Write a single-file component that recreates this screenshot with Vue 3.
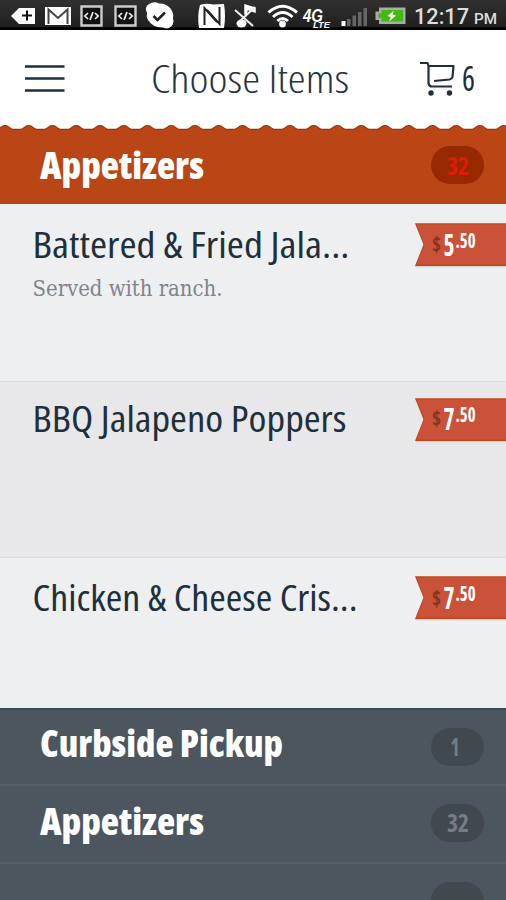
<script setup>
const items = [
  { name: 'Battered & Fried Jala...', width: 317, base: 52.5, note: 'Served with ranch.', height: 177, tag: 18, dollars: '5', cents: '.50', drop: 32.5 },
  { name: 'BBQ Jalapeno Poppers', width: 314, base: 49.5, height: 176, tag: 16, dollars: '7', cents: '.50', drop: 31.5, shade: true },
  { name: 'Chicken & Cheese Cris...', width: 325, base: 53, height: 151, tag: 18, dollars: '7', cents: '.50', drop: 33 }
]

const categories = [
  { name: 'Curbside Pickup', count: '1', width: 243, countWidth: 9, countX: 19.5, base: 49, height: 78, pad: 20 },
  { name: 'Appetizers', count: '32', width: 164, countWidth: 22, countX: 16, base: 49, height: 78, pad: 18 },
  { name: '', count: '', width: 0, height: 36, pad: 18 }
]

// scalloped top edge of the active category
const period = 23.75
let wave = 'M-18.75 10V0'
for (let x = -18.75; x < 520; x += period) {
  wave += `C${x + 4.5} 0 ${x + 4.5} 3.8 ${x + 9.5} 3.8H${x + period - 9.5}C${x + period - 4.5} 3.8 ${x + period - 4.5} 0 ${x + period} 0`
}
wave += 'V10Z'
</script>

<template>
  <main class="screen">
    <div class="status">
      <svg width="40" height="30" viewBox="0 0 40 30"><path d="M11 16 19 8H35V24H19Z" fill="#fff" /><path d="M22 15.5H32M27 10.5V20.5" stroke="#111" stroke-width="2" /></svg>
      <svg width="36" height="30" viewBox="40 0 36 30"><path d="M45 7H71V25H45Z" fill="#fff" /><path d="M48.500 24V9.500L58 18 67.500 9.500V24" fill="none" stroke="#444" stroke-width="2" /></svg>
      <svg v-for="n in 2" :key="n" width="34" height="30" viewBox="0 0 34 30"><path d="M5.5 6.5H25.5V25.5H5.5Z" fill="#111" stroke="#ccc" stroke-width="2.4" /><path d="M12 13 8.8 16 12 19M19 13 22.2 16 19 19M17 12 14 20" fill="none" stroke="#eee" stroke-width="1.7" /></svg>
      <svg width="44" height="30" viewBox="144 0 44 30"><path d="M149 4Q154 1 159 3.500Q168 3 172 11Q174 15 173 18Q175 25 169 28Q166 29 163 27.500Q153 28 148 20Q146 17 147 13Q144 7 149 4Z" fill="#fff" /><path d="M153.500 16 157.500 20 165 12.500" fill="none" stroke="#222" stroke-width="2.6" /></svg>
      <svg width="42" height="30" viewBox="188 0 42 30"><path d="M200 5Q206 3 213 4.500L224 4Q226 16 224 28H212L199 28Q197 16 200 5Z" fill="#fff" /><path d="M204.500 25V8L217 22M207 10 219.500 24V7" fill="none" stroke="#222" stroke-width="2" /></svg>
      <svg width="32" height="30" viewBox="230 0 32 30"><ellipse cx="241.500" cy="23.500" rx="5" ry="4" fill="#fff" /><path d="M245 23V5L255 8V12L248 9.500" fill="#fff" stroke="#fff" stroke-width="1.500" /><path d="M234 8 253 25" stroke="#292929" stroke-width="4" /><path d="M235 10 253 26M255 7 239 22" stroke="#eee" stroke-width="2" /></svg>
      <svg width="38" height="30" viewBox="262 0 38 30"><g fill="none" stroke="#fff" stroke-width="3"><path d="M268.500 12.500Q282.500 0 297 12.500M273 17Q282.500 8 292.500 17M277.500 21Q282.500 16 288 21" /></g><circle cx="282.500" cy="24" r="3.400" fill="#fff" /></svg>
      <svg width="38" height="30" viewBox="300 0 38 30"><g class="network"><text x="303" y="22" font-size="18" textLength="20" lengthAdjust="spacingAndGlyphs">4G</text><text x="313" y="28" font-size="9" textLength="17" lengthAdjust="spacingAndGlyphs">LTE</text></g></svg>
      <svg width="34" height="30" viewBox="338 0 34 30"><path d="M341.500 21H345.500V26H341.500Z" fill="#fff" /><path d="M347 19H350.500V26H347ZM352.500 15.500H356V26H352.500ZM358 12H361.500V26H358ZM363.500 8H367V26H363.500Z" fill="#666" /></svg>
      <svg width="38" height="30" viewBox="372 0 38 30"><path d="M379 7.500H405.500V24H379V20H375.500V11.500H379Z" fill="#aaa" /><path d="M381.500 10H403V21.500H381.500V18H378.500V13.500H381.500Z" fill="#45b811" /><path d="M394 10.500 387.500 16 391 17 389 21.500 396 15.500 392.500 14.500Z" fill="#fff" /></svg>
      <svg width="96" height="30" viewBox="410 0 96 30"><g class="clock"><text x="414" y="24" font-size="21.500" textLength="55" lengthAdjust="spacingAndGlyphs">12:17</text><text x="474" y="24" font-size="14.500" textLength="23" lengthAdjust="spacingAndGlyphs">PM</text></g></svg>
    </div>

    <header class="header">
      <svg class="menu" width="40" height="30" viewBox="0 0 40 30"><path d="M0 2.500H39.500M0 14.500H39.500M0 26.500H39.500" stroke="#1d3040" stroke-width="2.500" /></svg>
      <svg class="title" width="200" height="56" viewBox="0 0 200 56"><text x="0" y="42" textLength="198" lengthAdjust="spacingAndGlyphs">Choose Items</text></svg>
      <svg class="cart" width="60" height="56" viewBox="418 50 60 56">
        <g fill="none" stroke="#1d3040" stroke-width="2.200" stroke-linejoin="round"><path d="M420 63H427.500L428.500 66V83Q429 86.500 432 86.500H452" /><path d="M428.500 66H453.500L452.500 77Q452 79 449.500 79.500L434 81" /></g>
        <circle cx="431" cy="93" r="2.700" fill="#1d3040" /><circle cx="449.500" cy="93" r="2.700" fill="#1d3040" />
        <text x="462" y="91" textLength="13" lengthAdjust="spacingAndGlyphs">6</text>
      </svg>
    </header>

    <section class="active">
      <svg class="wave" width="506" height="10" viewBox="0 0 506 10"><path :d="wave" fill="#8f2f08" /><path :d="wave" transform="translate(0 .9)" fill="#b94614" /></svg>
      <div class="active-body">
        <svg class="category" width="260" height="60" viewBox="0 0 260 60"><text x="0" y="44" textLength="164" lengthAdjust="spacingAndGlyphs">Appetizers</text></svg>
        <span class="badge"><svg width="53" height="38" viewBox="0 0 53 38"><text x="16" y="28.500" textLength="22" lengthAdjust="spacingAndGlyphs">32</text></svg></span>
      </div>
    </section>

    <article v-for="item in items" :key="item.name" class="item" :class="{ shade: item.shade }" :style="{ height: item.height + 'px' }">
      <div class="copy">
        <svg width="360" height="68" viewBox="0 0 360 68"><text class="name" x="-0.5" :y="item.base" :textLength="item.width" lengthAdjust="spacingAndGlyphs">{{ item.name }}</text></svg>
        <svg v-if="item.note" width="220" height="34" viewBox="0 0 220 34"><text class="note" x="-0.5" y="22.5" textLength="190" lengthAdjust="spacingAndGlyphs">{{ item.note }}</text></svg>
      </div>
      <svg class="tag" width="91" height="46" viewBox="0 0 91 46" :style="{ marginTop: item.tag + 'px' }">
        <path d="M0 1H91V44.500H0L8.500 22.500Z" fill="#d8d7d8" />
        <path d="M0 .3H91V43H0L8.500 21.500Z" fill="#c34416" />
        <path d="M1.500 1.500H91V41.500H1.500L9.500 21.500Z" fill="#ca5239" />
        <text class="dollar" x="17" :y="item.drop - 3.5" textLength="9" lengthAdjust="spacingAndGlyphs">$</text>
        <text class="whole" x="28.500" :y="item.drop" textLength="11" lengthAdjust="spacingAndGlyphs">{{ item.dollars }}</text>
        <text class="cents" x="40.500" :y="item.drop - 8" textLength="20" lengthAdjust="spacingAndGlyphs">{{ item.cents }}</text>
      </svg>
    </article>

    <section class="categories">
      <div v-for="(category, i) in categories" :key="i" class="row" :style="{ height: category.height + 'px' }">
        <svg class="category" width="260" height="60" viewBox="0 0 260 60"><text v-if="category.name" x="0" :y="category.base" :textLength="category.width" lengthAdjust="spacingAndGlyphs">{{ category.name }}</text></svg>
        <span class="badge" :style="{ marginTop: category.pad + 'px' }"><svg width="53" height="38" viewBox="0 0 53 38"><text v-if="category.count" :x="category.countX" y="27.500" :textLength="category.countWidth" lengthAdjust="spacingAndGlyphs">{{ category.count }}</text></svg></span>
      </div>
    </section>
  </main>
</template>

<style>
body { margin: 0; overflow: hidden; }
</style>

<style scoped>
.screen { width: 506px; height: 900px; overflow: hidden; background: #fff; font-family: "Open Sans", "Noto Sans", sans-serif; font-stretch: 75%; }
svg { display: block; flex: none; overflow: visible; }
.status { display: flex; height: 30px; background: linear-gradient(#303030, #202020 90%, #000 92%); }
.network { fill: #fff; font-family: "Liberation Sans", sans-serif; font-weight: 700; font-style: italic; }
.clock { fill: #ddd; font-family: Roboto, sans-serif; font-stretch: 100%; font-weight: 500; }
.header { display: flex; height: 95px; align-items: flex-start; }
.menu { margin: 34px 0 0 25px; }
.title { margin: 21px 0 0 86px; fill: #263442; font-size: 39px; font-weight: 300; }
.cart { margin: 20px 0 0 67px; fill: #1d3040; font-size: 35px; font-weight: 500; }
.active { height: 79px; background: linear-gradient(#b94614 98%, #a93d12); }
.wave { background: #fff; overflow: hidden; }
.active-body { display: flex; justify-content: space-between; padding: 0 22px 0 40px; }
.category { fill: #fff; font-size: 37px; font-weight: 800; }
.badge { width: 53px; height: 38px; border-radius: 19px; background: #982800; fill: #dc1b0c; font-size: 24px; font-weight: 700; }
.active .badge { margin-top: 11px; }
.item { display: flex; box-sizing: border-box; justify-content: space-between; padding-left: 33px; background: #edeff1; border-top: 1px solid #d9dbdd; }
.item:first-of-type { border-top-color: #f4f3f4; }
.shade { background: #e8e8ea; }
.name { fill: #20303a; font-size: 37px; font-weight: 500; }
.note { fill: #7d858e; font-family: "DejaVu Serif", serif; font-size: 21.500px; }
.dollar { fill: #84351d; font-size: 22px; font-weight: 700; }
.whole { fill: #fff; font-size: 31px; font-weight: 700; }
.cents { fill: #fff; font-size: 21px; font-weight: 700; }
.categories { height: 192px; background: #4c565e; box-shadow: inset 0 2px #414b50; }
.row { display: flex; box-sizing: border-box; justify-content: space-between; padding: 0 22.500px 0 40px; border-bottom: 2px solid #545f67; }
.row:last-child { border-bottom: 0; }
.row .badge { background: #41494f; fill: #737e87; }
</style>
